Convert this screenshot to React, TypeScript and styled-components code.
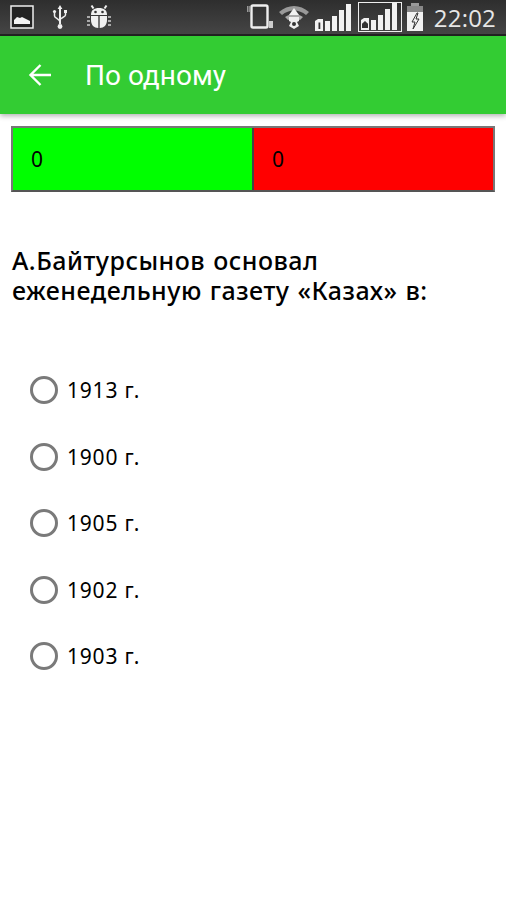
import { createGlobalStyle } from "styled-components";
import styled from "styled-components";

const GlobalStyle = createGlobalStyle`
  html, body {
    margin: 0;
    padding: 0;
    background: #fff;
  }
  body {
    font-family: "Noto Sans", "Open Sans", sans-serif;
    color: #000;
  }
`;

const answers = ["1913 г.", "1900 г.", "1905 г.", "1902 г.", "1903 г."];

const GalleryIcon = () => (
  <svg width="24" height="24" viewBox="0 0 24 24">
    <rect x="1" y="1" width="22" height="22" fill="#222" stroke="#eee" strokeWidth="1.5" />
    <path d="M4 19v-4l3-3 3 1 2-1 2 1 2 1 4 2v3z" fill="#f2f2f2" />
  </svg>
);

const UsbIcon = () => (
  <svg width="16" height="26" viewBox="0 0 16 26">
    <path d="M8 1l2.4 4H9v15H7V5H5.6z" fill="#eee" />
    <circle cx="8" cy="22.5" r="2.4" fill="#eee" />
    <path d="M2.5 8v4c0 2 5.5 3 5.5 6M13.5 8v3c0 2-5.5 3-5.5 5" fill="none" stroke="#eee" strokeWidth="1.5" />
    <circle cx="2.5" cy="7.5" r="1.6" fill="#eee" />
    <rect x="12" y="6" width="3" height="3" fill="#eee" />
  </svg>
);

const BugIcon = () => (
  <svg width="26" height="26" viewBox="0 0 26 26">
    <path d="M5 11c0-5 3-7 8-7s8 2 8 7z" fill="#f0f0f0" />
    <path d="M5 12h7.3v12C8 24 5 21 5 16zM13.7 12H21v4c0 5-3 8-7.3 8z" fill="#f0f0f0" />
    <circle cx="9.5" cy="8" r="1.3" fill="#333" />
    <circle cx="16.5" cy="8" r="1.3" fill="#333" />
    <path d="M7.5 4.5L5.5 1.5M18.5 4.5l2-3" stroke="#eee" strokeWidth="2" />
    <path d="M1 12h3v2H1zM22 12h3v2h-3zM1 16h3v2H1zM22 16h3v2h-3zM1 20h3v2H1zM22 20h3v2h-3z" fill="#aaa" />
  </svg>
);

const RotateIcon = () => (
  <svg width="28" height="26" viewBox="0 0 28 26">
    <rect x="5.5" y="1.5" width="16" height="22" rx="1.5" fill="none" stroke="#eee" strokeWidth="2.4" />
    <path d="M1 2h1.5v6H1zM3.2 2h1v6h-1z" fill="#999" />
    <path d="M23 17h4v7h-4z" fill="#ccc" />
  </svg>
);

const WifiIcon = () => (
  <svg width="32" height="26" viewBox="0 0 32 26">
    <path d="M1 8c9-8 21-8 30 0l-3 3c-7-6-17-6-24 0z" fill="#999" />
    <path d="M7 13c6-4 12-4 18 0l-3 3c-4-2-8-2-12 0z" fill="#aaa" />
    <path d="M16 4l5 7H11z" fill="#f2f2f2" />
    <path d="M11 13h10v4l-2 1 2 4-5 3-5-3 2-4-2-1z" fill="#eee" />
    <circle cx="16" cy="20" r="2" fill="#333" />
  </svg>
);

const SignalBars = ({ badge }: { badge: "one" | "home" }) => (
  <svg width="40" height="28" viewBox="0 0 40 28">
    <path d="M1 18l3-2h5v12H1z" fill="#f2f2f2" />
    {badge === "one" ? (
      <path d="M4.5 19.5h1.8v6.5H4.5z" fill="#333" />
    ) : (
      <path d="M5 19l3 2.8V26H2v-4.2z" fill="#333" />
    )}
    <rect x="11" y="18" width="5" height="10" fill="#f2f2f2" />
    <rect x="18" y="13" width="5" height="15" fill="#f2f2f2" />
    <rect x="25" y="7" width="5" height="21" fill="#f2f2f2" />
    <rect x="32" y="1" width="5" height="27" fill="#f2f2f2" />
  </svg>
);

const BatteryIcon = () => (
  <svg width="18" height="30" viewBox="0 0 18 30">
    <path d="M5 1h8v3H5z" fill="#999" />
    <path d="M1 4h16v6H1z" fill="#888" />
    <path d="M1 10h16v19H1z" fill="#f2f2f2" />
    <path d="M11 11l-5 9h3l-2 7 6-10h-3l2-6z" fill="none" stroke="#333" strokeWidth="1" />
  </svg>
);

const BackArrow = () => (
  <svg width="24" height="24" viewBox="0 0 24 24">
    <path d="M23 12H3M12.5 2L2.5 12l10 10" fill="none" stroke="#fff" strokeWidth="2.4" />
  </svg>
);

export default function App() {
  return (
    <Screen>
      <GlobalStyle />
      <StatusBar>
        <StatusGroup>
          <GalleryIcon />
          <UsbIcon />
          <BugIcon />
        </StatusGroup>
        <StatusGroupRight>
          <RotateIcon />
          <WifiIcon />
          <SignalBars badge="one" />
          <SimFrame>
            <SignalBars badge="home" />
          </SimFrame>
          <BatteryIcon />
          <Clock>22:02</Clock>
        </StatusGroupRight>
      </StatusBar>
      <AppBar>
        <BackArrow />
        <AppTitle>По одному</AppTitle>
      </AppBar>
      <Content>
        <ScoreRow>
          <ScoreCell $color="#00ff00">0</ScoreCell>
          <ScoreCell $color="#ff0000">0</ScoreCell>
        </ScoreRow>
        <Question>А.Байтурсынов основал еженедельную газету «Казах» в:</Question>
        <AnswerList>
          {answers.map((answer) => (
            <AnswerRow key={answer}>
              <RadioCircle />
              <AnswerText>{answer}</AnswerText>
            </AnswerRow>
          ))}
        </AnswerList>
      </Content>
    </Screen>
  );
}

//style
const Screen = styled.div`
  width: 506px;
  height: 900px;
  overflow: hidden;
  display: flex;
  flex-direction: column;
  background: #fff;
`;

const StatusBar = styled.div`
  height: 34px;
  flex-shrink: 0;
  display: flex;
  align-items: center;
  justify-content: space-between;
  padding: 0 10px;
  background: linear-gradient(#2e2e2e, #454545);
  border-bottom: 2px solid #222;
`;

const StatusGroup = styled.div`
  display: flex;
  align-items: center;
  gap: 18px;
`;

const StatusGroupRight = styled.div`
  display: flex;
  align-items: center;
  gap: 4px;
`;

const SimFrame = styled.div`
  display: flex;
  padding: 1px;
  border: 1px solid #eee;
  height: 30px;
  box-sizing: border-box;
  align-items: flex-end;
  overflow: hidden;
`;

const Clock = styled.span`
  margin-left: 6px;
  font-size: 24px;
  color: #e6e6e6;
  font-family: "Open Sans", sans-serif;
  letter-spacing: 0.2px;
`;

const AppBar = styled.div`
  height: 78px;
  flex-shrink: 0;
  display: flex;
  align-items: center;
  gap: 33px;
  padding: 0 28px;
  background: #33cc33;
  box-shadow: 0 2px 5px rgba(0, 0, 0, 0.3);
  position: relative;
`;

const AppTitle = styled.h1`
  margin: 0;
  font-family: Roboto, sans-serif;
  font-size: 28px;
  font-weight: 400;
  color: #fff;
`;

const Content = styled.div`
  padding: 12px 11px 0 11px;
  display: flex;
  flex-direction: column;
`;

const ScoreRow = styled.div`
  display: flex;
  height: 66px;
  box-sizing: border-box;
  border: 2px solid #777;
  border-bottom-color: #555;
`;

const ScoreCell = styled.div<{ $color: string }>`
  flex: 1;
  display: flex;
  align-items: center;
  padding-left: 18px;
  font-size: 21px;
  background: ${(p) => p.$color};
  & + & {
    border-left: 2px solid #444;
  }
`;

const Question = styled.p`
  margin: 53px 0 0 1px;
  max-width: 440px;
  font-size: 25px;
  line-height: 30px;
  font-weight: 500;
  letter-spacing: 0.5px;
  word-spacing: 1px;
`;

const AnswerList = styled.div`
  display: flex;
  flex-direction: column;
  margin-top: 52px;
  padding-left: 19px;
`;

const AnswerRow = styled.div`
  height: 66.5px;
  display: flex;
  align-items: center;
  gap: 9px;
`;

const RadioCircle = styled.span`
  width: 28px;
  height: 28px;
  box-sizing: border-box;
  border: 3px solid #7a7a7a;
  border-radius: 50%;
`;

const AnswerText = styled.span`
  font-size: 21px;
  letter-spacing: 0.8px;
`;
